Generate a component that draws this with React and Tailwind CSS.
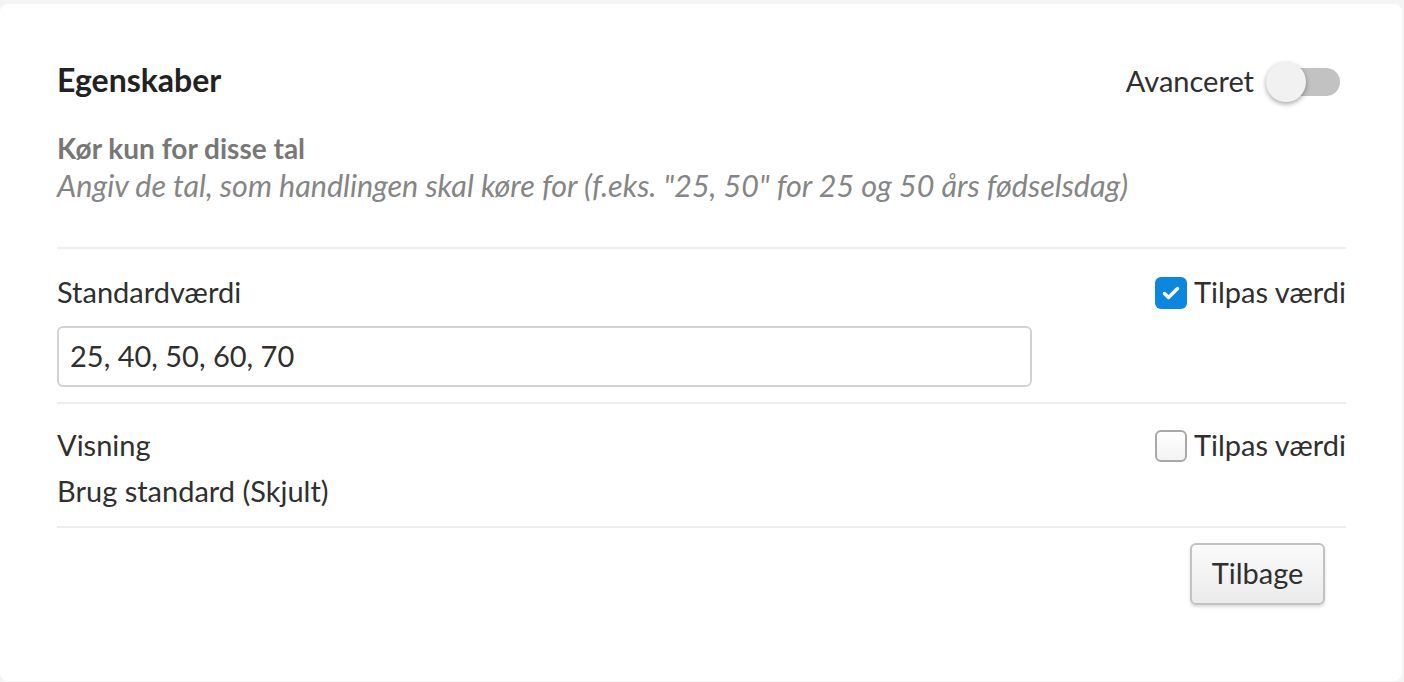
import React from "react";

function Checkbox({ checked }) {
  if (checked) {
    return (
      <span className="flex h-[32px] w-[32px] shrink-0 items-center justify-center rounded-[6px] bg-[#0b87de]">
        <svg width="24" height="24" viewBox="0 0 24 24" fill="none">
          <path d="M5.5 12.5l4 4L18.5 7.5" stroke="white" strokeWidth="3.4" strokeLinecap="round" strokeLinejoin="round" />
        </svg>
      </span>
    );
  }
  return (
    <span className="h-[32px] w-[32px] shrink-0 rounded-[6px] border-2 border-[#a8a8a8] bg-gradient-to-b from-white to-[#f3f3f3]" />
  );
}

export default function App() {
  const font = { fontFamily: "Lato, 'Open Sans', Arial, sans-serif" };
  return (
    <div className="min-h-screen bg-[#f4f4f4] pt-[4px] pr-[2px]" style={font}>
      <div className="h-[677px] rounded-[8px] bg-white pl-[57px] pr-[56px] pt-[53px] text-[29px] text-[#2f2f2f]">
        <div className="flex h-[50px] items-center justify-between">
          <h1 className="-mt-[5px] text-[32px] font-bold leading-[36px] text-[#222]">Egenskaber</h1>
          <div className="mr-[6px] flex items-center gap-[12px]">
            <span className="-mt-[2px] leading-[30px]">Avanceret</span>
            <span className="relative flex h-[40px] w-[74px] items-center">
              <span className="ml-[18px] h-[28px] w-[56px] rounded-full bg-[#c2c2c2]" />
              <span className="absolute left-0 top-0 h-[40px] w-[40px] rounded-full bg-[#f1f1f1] shadow-[0_2px_5px_rgba(0,0,0,0.35)]" />
            </span>
          </div>
        </div>

        <div className="mt-[26px] text-[28px] font-bold leading-[30px] text-[#777]">Kør kun for disse tal</div>
        <div className="mt-[7px] text-[30.5px] italic leading-[30px] text-[#858585]">
          Angiv de tal, som handlingen skal køre for (f.eks. "25, 50" for 25 og 50 års fødselsdag)
        </div>

        <div className="mt-[47px] h-[2px] bg-[#eeeeee]" />

        <div className="mt-[27px] flex h-[34px] items-center justify-between">
          <span className="-mt-[3px] leading-[30px]">Standardværdi</span>
          <label className="flex items-center gap-[7px]">
            <Checkbox checked />
            <span className="-mt-[3px] leading-[30px]">Tilpas værdi</span>
          </label>
        </div>

        <div className="mt-[16px] flex h-[61px] w-[975px] items-center rounded-[6px] border-2 border-[#d2d2d2] pb-[2px] pl-[11px] leading-[30px]">
          25, 40, 50, 60, 70
        </div>

        <div className="mt-[15px] h-[2px] bg-[#eeeeee]" />

        <div className="mt-[26px] flex h-[32px] items-center justify-between">
          <span className="-mt-[3px] leading-[30px]">Visning</span>
          <label className="flex items-center gap-[7px]">
            <Checkbox checked={false} />
            <span className="-mt-[3px] leading-[30px]">Tilpas værdi</span>
          </label>
        </div>
        <div className="mt-[14px] leading-[30px]">Brug standard (Skjult)</div>

        <div className="mt-[20px] h-[2px] bg-[#eeeeee]" />

        <div className="mt-[15px] flex justify-end pr-[21px]">
          <button className="h-[62px] w-[135px] rounded-[6px] border-2 border-[#c2c2c2] bg-gradient-to-b from-[#fbfbfb] to-[#ebebeb] pb-[3px] leading-[30px] text-[#2f2f2f] shadow-[0_2px_3px_rgba(0,0,0,0.15)]">
            Tilbage
          </button>
        </div>
      </div>
    </div>
  );
}
